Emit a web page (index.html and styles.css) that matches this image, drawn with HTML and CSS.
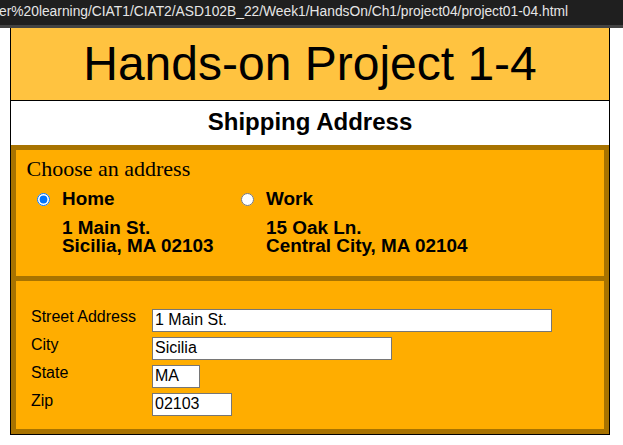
FILE: index.html
```html
<!DOCTYPE html>
<html lang="en">
<head>
<meta charset="utf-8">
<title>Hands-on Project 1-4</title>
<link rel="stylesheet" href="styles.css">
</head>
<body>
<div class="urlbar"><span class="url">er%20learning/CIAT1/CIAT2/ASD102B_22/Week1/HandsOn/Ch1/project04/project01-04.html</span></div>
<div class="page">
  <header class="banner"><h1>Hands-on Project 1-4</h1></header>
  <article class="content">
    <h2>Shipping Address</h2>
    <div class="box choose">
      <div class="prompt">Choose an address</div>
      <div class="options">
        <label class="option">
          <input type="radio" name="addr" checked>
          <span class="opt-text">
            <span class="opt-name">Home</span>
            <span class="opt-addr">1 Main St.<br>Sicilia, MA 02103</span>
          </span>
        </label>
        <label class="option">
          <input type="radio" name="addr">
          <span class="opt-text">
            <span class="opt-name">Work</span>
            <span class="opt-addr">15 Oak Ln.<br>Central City, MA 02104</span>
          </span>
        </label>
      </div>
    </div>
    <div class="box fields">
      <label class="lbl" for="street">Street Address</label>
      <input class="inp w-street" id="street" type="text" value="1 Main St.">
      <label class="lbl" for="city">City</label>
      <input class="inp w-city" id="city" type="text" value="Sicilia">
      <label class="lbl" for="state">State</label>
      <input class="inp w-state" id="state" type="text" value="MA">
      <label class="lbl" for="zip">Zip</label>
      <input class="inp w-zip" id="zip" type="text" value="02103">
    </div>
  </article>
</div>
</body>
</html>
```
FILE: styles.css
```css
html, body {
  margin: 0;
  padding: 0;
  background: #ffffff;
}

body {
  font-family: "Liberation Sans", Arial, sans-serif;
  color: #000;
}

.urlbar {
  height: 25px;
  background: #1f1f1f;
  border-bottom: 3px solid #434343;
  overflow: hidden;
  white-space: nowrap;
}

.url {
  display: block;
  margin-left: -1px;
  font-family: "Liberation Sans", Arial, sans-serif;
  font-size: 13.8px;
  line-height: 24px;
  color: #e6e6e6;
}

.page {
  width: 598px;
  margin-left: 10px;
  border: 1px solid #000;
  border-top: none;
}

.banner {
  background: #ffc340;
  padding: 8px 0 9px;
  border-bottom: 1px solid #000;
}

.banner h1 {
  margin: 0;
  font-size: 48px;
  line-height: 55px;
  font-weight: normal;
  text-align: center;
}

.content h2 {
  margin: 0;
  padding: 7px 0 9px;
  font-size: 24px;
  line-height: 28px;
  font-weight: bold;
  text-align: center;
}

.box {
  background: #ffad00;
  border: 5px solid #a87300;
}

.choose {
  padding: 6px 0 21px 10.5px;
}

.prompt {
  font-family: "Liberation Serif", "Times New Roman", serif;
  font-size: 22px;
  line-height: 25px;
}

.options {
  display: flex;
  margin: 7px 0 0 10.5px;
}

.option {
  width: 204px;
  display: flex;
  align-items: flex-start;
  font-size: 18.9px;
  font-weight: bold;
}

.option input {
  width: 13px;
  height: 13px;
  margin: 5px 12px 0 0;
  flex: none;
}

.opt-text {
  display: flex;
  flex-direction: column;
}

.opt-name {
  line-height: 22px;
}

.opt-addr {
  margin-top: 8.5px;
  line-height: 18px;
  white-space: nowrap;
}

.fields {
  border-top: none;
  padding: 27px 0 13px 15px;
  display: grid;
  grid-template-columns: 121px auto;
  row-gap: 4px;
  align-items: start;
  justify-items: start;
}

.lbl {
  font-size: 16px;
  line-height: 18px;
}

.inp {
  box-sizing: border-box;
  height: 23px;
  margin: 1px 0 0;
  padding: 1px 2px;
  border: 1px solid #767676;
  border-radius: 0;
  background: #fff;
  font-family: "Liberation Sans", Arial, sans-serif;
  font-size: 16px;
  color: #000;
}

.w-street { width: 400px; }
.w-city { width: 240px; }
.w-state { width: 48px; }
.w-zip { width: 80px; }
```
